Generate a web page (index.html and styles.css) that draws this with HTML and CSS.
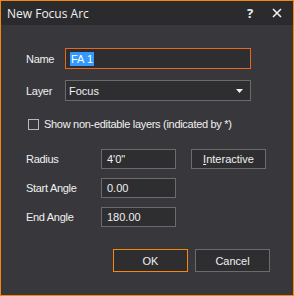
FILE: index.html
```html
<!DOCTYPE html>
<html lang="en">
<head>
    <meta charset="UTF-8">
    <title>New Focus Arc</title>
    <link rel="stylesheet" href="styles.css">
</head>
<body>

    <div class="dialog">
        <div class="titlebar">
            <span class="title">New Focus Arc</span>
            <span class="title-btn help">?</span>
            <span class="title-btn close">
                <svg width="10" height="10" viewBox="0 0 10 10"><path d="M1 1 L9 9 M9 1 L1 9" stroke="#f0f0f0" stroke-width="1.6"/></svg>
            </span>
        </div>

        <div class="content">
            <div class="row">
                <label class="label-short">Name</label>
                <div class="field field-active"><span class="selected">FA 1</span></div>
            </div>

            <div class="row margin-11">
                <label class="label-short">Layer</label>
                <div class="field select">
                    <span>Focus</span>
                    <svg width="7" height="4" viewBox="0 0 7 4"><path d="M0 0 H7 L3.5 4 Z" fill="#f0f0f0"/></svg>
                </div>
            </div>

            <div class="check-row">
                <span class="checkbox"></span>
                <span>Show non-editable layers (indicated by *)</span>
            </div>

            <div class="values">
                <label>Radius</label>
                <div class="field small">4'0"</div>
                <button class="btn"><u>I</u>nteractive</button>

                <label>Start Angle</label>
                <div class="field small">0.00</div>
                <span></span>

                <label>End Angle</label>
                <div class="field small">180.00</div>
                <span></span>
            </div>

            <div class="actions">
                <button class="btn btn-default">OK</button>
                <button class="btn">Cancel</button>
            </div>
        </div>
    </div>

</body>
</html>
```

FILE: styles.css
```css
body{
    margin: 0;
    background: #38383c;
}
.dialog
{
    width: 294px;
    height: 296px;
    box-sizing: border-box;
    border: 1px solid #f5880f;
    background: #38383c;
    color: #f0f0f0;
    font-family: "Liberation Sans", Arial, sans-serif;
    font-size: 11px;
    letter-spacing: -0.3px;
}
.titlebar
{
    height: 24px;
    background: #2b2b2e;
    display: flex;
    align-items: center;
    padding-left: 6px;
    letter-spacing: 0;
}
.title
{
    font-family: "Open Sans", sans-serif;
    font-size: 12px;
    flex: 1;
}
.title-btn
{
    width: 20px;
    text-align: center;
    font-family: "Open Sans", sans-serif;
    font-size: 13px;
    font-weight: bold;
}
.help
{
    margin-right: 7px;
}
.close
{
    display: flex;
    justify-content: center;
    margin-right: 6px;
}
.content
{
    padding: 23px 23px 0 25px;
}
.row
{
    display: flex;
    align-items: center;
}
.margin-11
{
    margin-top: 11px;
}
.label-short
{
    width: 39px;
}
.field
{
    box-sizing: border-box;
    width: 186px;
    height: 21px;
    border: 1px solid #6b6b6b;
    background: #2e2e31;
    display: flex;
    align-items: center;
    padding-left: 3px;
    letter-spacing: 0;
}
.field-active
{
    border-color: #e8651c;
    padding-left: 4px;
}
.selected
{
    background: #3399ff;
    color: white;
    padding: 1px 1px;
}
.select
{
    justify-content: space-between;
    padding-right: 7px;
    padding-left: 3px;
}
.check-row
{
    display: flex;
    align-items: center;
    gap: 5px;
    margin-top: 17px;
    margin-left: 2px;
}
.checkbox
{
    width: 9px;
    height: 9px;
    border: 1px solid #b8b8b8;
}
.values
{
    display: grid;
    grid-template-columns: 60px 75px 75px;
    column-gap: 15px;
    row-gap: 9px;
    align-items: center;
    margin-top: 19px;
}
.small
{
    width: 75px;
    height: 20px;
    padding-left: 5px;
}
.btn
{
    box-sizing: border-box;
    width: 75px;
    height: 20px;
    background: #2e2e31;
    border: 1px solid #6b6b6b;
    color: #f0f0f0;
    font-family: "Liberation Sans", Arial, sans-serif;
    font-size: 11px;
    padding: 0;
}
.actions
{
    display: flex;
    justify-content: flex-end;
    gap: 7px;
    margin-top: 22px;
}
.actions .btn
{
    height: 23px;
}
.btn-default
{
    border-color: #f5880f;
}
```
